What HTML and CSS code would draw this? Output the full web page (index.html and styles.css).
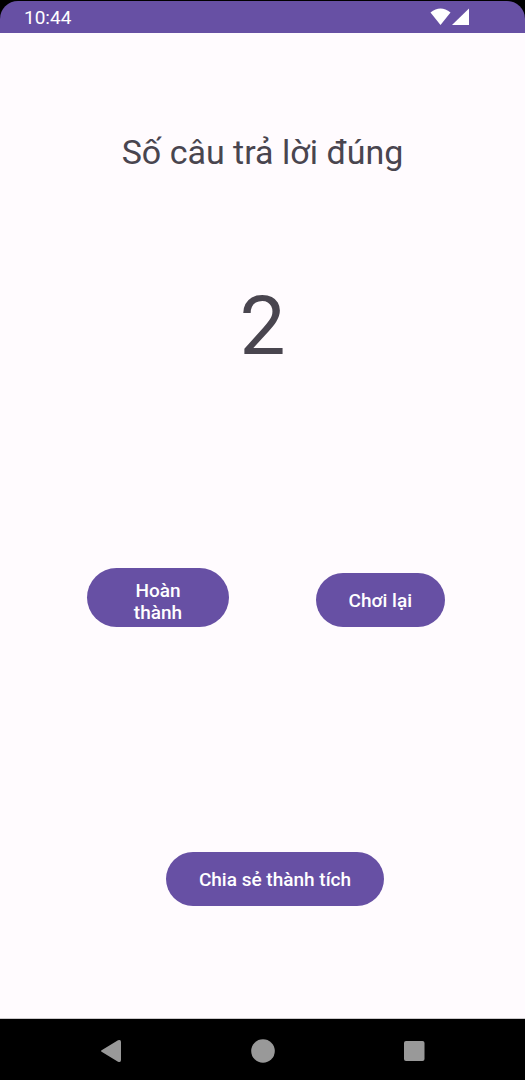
FILE: index.html
```html
<!DOCTYPE html>
<html lang="vi">
<head>
<meta charset="utf-8">
<meta name="viewport" content="width=device-width, initial-scale=1">
<title>Kết quả</title>
<link rel="stylesheet" href="styles.css">
</head>
<body class="screen">
  <header class="status">
    <div class="status-bar">
      <time class="clock">10:44</time>
      <svg class="signals" width="40" height="18" viewBox="0 0 40 18" aria-hidden="true">
        <path d="M0.500 4.500Q10.500 -3.500 20.500 4.500L10.500 17Z" fill="#fff"/>
        <path d="M39 0.500V17H22Z" fill="#fff"/>
      </svg>
    </div>
  </header>
  <main class="result">
    <h1 class="title">Số câu trả lời đúng</h1>
    <output class="score">2</output>
    <div class="actions">
      <button class="button button-finish" type="button">Hoàn thành</button>
      <button class="button" type="button">Chơi lại</button>
    </div>
    <div class="share">
      <button class="button" type="button">Chia sẻ thành tích</button>
    </div>
  </main>
  <nav class="nav">
    <button class="nav-button" type="button" aria-label="Back">
      <svg width="24" height="24" viewBox="0 0 24 24"><path d="M2 11L18 1.300Q21 0 21 3V21Q21 24 18 22.700L2 13Q0 12 2 11Z" fill="#999"/></svg>
    </button>
    <button class="nav-button" type="button" aria-label="Home">
      <svg width="24" height="24" viewBox="0 0 24 24"><circle cx="12" cy="12" r="11.800" fill="#999"/></svg>
    </button>
    <button class="nav-button" type="button" aria-label="Recents">
      <svg width="24" height="24" viewBox="0 0 24 24"><rect x="2" y="2" width="20.500" height="20" rx="2" fill="#999"/></svg>
    </button>
  </nav>
</body>
</html>
```
FILE: styles.css
```css
.screen {
  margin: 0;
  min-height: 100vh;
  display: flex;
  flex-direction: column;
  background: #fffbfe;
  color: #49454f;
  font-family: Roboto, "Noto Sans", sans-serif;
}

.status {
  padding-top: 1px;
  background: #000;
}

.status-bar {
  display: flex;
  align-items: center;
  justify-content: space-between;
  height: 32px;
  padding: 0 55px 0 24px;
  border-radius: 18px 18px 0 0;
  background: #6750a4;
  color: #fff;
}

.clock {
  padding-top: 2px;
  font-size: 19px;
  line-height: 32px;
}

.result {
  flex: 1;
  display: flex;
  flex-direction: column;
  padding-top: 99px;
  border-bottom: 1px solid #ccc9cb;
}

.title {
  margin: 0;
  font-size: 34px;
  font-weight: 400;
  line-height: 40px;
  text-align: center;
}

.score {
  margin-top: 106px;
  font-size: 82px;
  line-height: 96px;
  text-align: center;
}

.actions {
  display: flex;
  align-items: flex-end;
  justify-content: space-between;
  margin-top: 194px;
  padding: 0 80px 0 87px;
}

.share {
  display: flex;
  justify-content: center;
  margin-top: 225px;
  padding-left: 25px;
}

.button {
  min-height: 54px;
  padding: 12px 33px 10px;
  border: 0;
  border-radius: 30px;
  background: #6750a4;
  color: #fff;
  font: 500 19px/22px Roboto, "Noto Sans", sans-serif;
}

.button-finish {
  width: 142px;
  padding-bottom: 3px;
}

.nav {
  display: grid;
  grid-template-columns: repeat(3, 1fr);
  height: 61px;
  padding: 0 36px;
  background: #000;
}

.nav-button {
  display: flex;
  align-items: center;
  justify-content: center;
  padding: 3px 0 0;
  border: 0;
  background: none;
}
```
